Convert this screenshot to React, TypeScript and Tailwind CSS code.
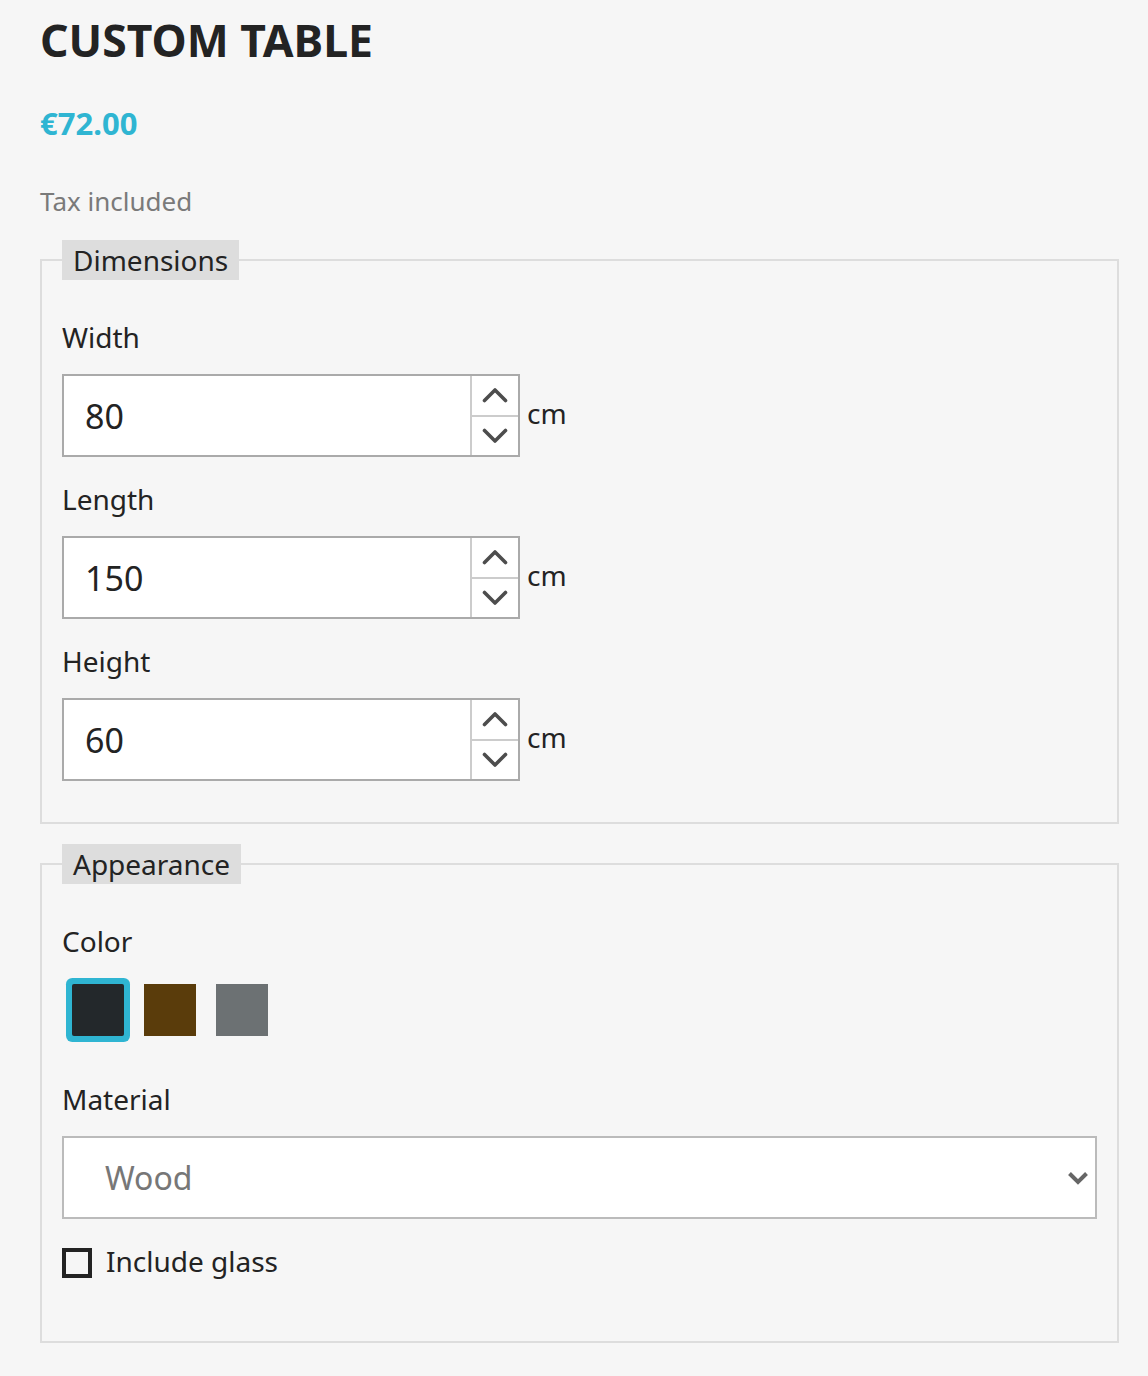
import React from 'react'

const dims = [
  { label: 'Width', value: '80' },
  { label: 'Length', value: '150' },
  { label: 'Height', value: '60' },
]

const swatches = [
  { color: 'bg-[#23282b]', selected: true },
  { color: 'bg-[#5a3c0b]', selected: false },
  { color: 'bg-[#6c7173]', selected: false },
]

const Chevron = ({ up }: { up?: boolean }) => (
  <svg width="26" height="16" viewBox="0 0 26 16" fill="none">
    <path
      d={up ? 'M2.5 13.5 L13 3 L23.5 13.5' : 'M2.5 2.5 L13 13 L23.5 2.5'}
      stroke="#4d4d4d"
      strokeWidth="3.6"
      strokeLinecap="round"
      strokeLinejoin="round"
    />
  </svg>
)

const NumberField = ({ label, value }: { label: string; value: string }) => (
  <div className="flex flex-col">
    <div className="text-[28px] leading-[40px] text-[#232323]">{label}</div>
    <div className="mt-[17px] flex items-center">
      <div className="flex h-[83px] w-[458px] border-2 border-[#aaaaaa] bg-white">
        <div className="flex flex-1 items-center pl-[21px] pt-[2px] text-[34px] text-[#232323]">{value}</div>
        <div className="flex w-[48px] flex-col border-l-2 border-[#cccccc]">
          <div className="flex flex-1 items-center justify-center border-b-2 border-[#cccccc]">
            <Chevron up />
          </div>
          <div className="flex flex-1 items-center justify-center">
            <Chevron />
          </div>
        </div>
      </div>
      <span className="ml-[7px] -mt-[6px] text-[28px] text-[#232323]">cm</span>
    </div>
  </div>
)

const Legend = ({ children }: { children: React.ReactNode }) => (
  <legend className="h-[40px] bg-[#dddddd] px-[11px] text-[28px] leading-[40px] text-[#232323]">
    {children}
  </legend>
)

export default function App() {
  return (
    <div className="min-h-[1376px] bg-[#f6f6f6] pl-[40px] pr-[29px] pt-[12px] font-['Noto_Sans',sans-serif]">
      <h1 className="text-[44.5px] font-bold leading-[55px] text-[#232323]">CUSTOM TABLE</h1>
      <div className="mt-[36px] text-[31px] font-bold leading-[40px] text-[#2fb5d2]">€72.00</div>
      <div className="mt-[40px] text-[26px] leading-[36px] text-[#7a7a7a]">Tax included</div>

      <fieldset className="mt-[21px] border-2 border-[#dddddd] px-[20px] pb-[41px] pt-[37px]">
        <Legend>Dimensions</Legend>
        <div className="flex flex-col gap-[22px]">
          {dims.map((d) => (
            <NumberField key={d.label} label={d.label} value={d.value} />
          ))}
        </div>
      </fieldset>

      <fieldset className="mt-[20px] border-2 border-[#dddddd] px-[20px] pb-[63px] pt-[37px]">
        <Legend>Appearance</Legend>
        <div className="text-[28px] leading-[40px] text-[#232323]">Color</div>
        <div className="mt-[23px] flex gap-[20px] pl-[10px]">
          {swatches.map((s, i) => (
            <div
              key={i}
              className={
                'h-[52px] w-[52px] ' +
                s.color +
                (s.selected ? ' rounded-[2px] shadow-[0_0_0_6px_#2fb5d2]' : '')
              }
            />
          ))}
        </div>

        <div className="mt-[43px] text-[28px] leading-[40px] text-[#232323]">Material</div>
        <div className="mt-[17px] flex h-[83px] w-full items-center justify-between border-2 border-[#bbbbbb] bg-white pl-[41px] pr-[6px]">
          <span className="text-[32px] text-[#777777]">Wood</span>
          <svg width="22" height="14" viewBox="0 0 22 14" fill="none">
            <path d="M2.5 2.5 L11 11 L19.5 2.5" stroke="#666" strokeWidth="4" strokeLinejoin="miter" />
          </svg>
        </div>

        <label className="mt-[29px] flex items-center">
          <span className="h-[30px] w-[30px] border-[4px] border-[#232323]" />
          <span className="ml-[14px] -mt-[4px] text-[28px] leading-[30px] text-[#232323]">Include glass</span>
        </label>
      </fieldset>
    </div>
  )
}
